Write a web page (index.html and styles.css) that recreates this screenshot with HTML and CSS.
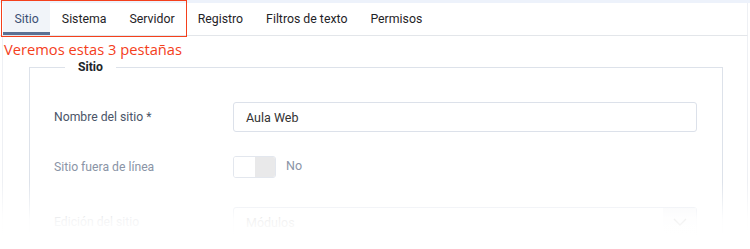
FILE: index.html
```html
<!DOCTYPE html>
<html lang="es">
<head>
<meta charset="utf-8">
<link rel="stylesheet" href="styles.css">
</head>
<body>
<div class="page">
  <div class="topstrip"></div>
  <nav class="tabs">
    <a class="tab active">Sitio</a>
    <a class="tab">Sistema</a>
    <a class="tab">Servidor</a>
    <a class="tab">Registro</a>
    <a class="tab">Filtros de texto</a>
    <a class="tab">Permisos</a>
  </nav>
  <div class="highlight"></div>
  <div class="panel">
    <p class="note">Veremos estas 3 pestañas</p>
    <fieldset class="group">
      <legend>Sitio</legend>
      <div class="row">
        <label class="lbl">Nombre del sitio *</label>
        <div class="input">Aula Web</div>
      </div>
      <div class="row row-toggle">
        <label class="lbl lbl-soft">Sitio fuera de línea</label>
        <div class="toggle"><span class="knob"></span><span class="track"></span></div>
        <span class="toggle-text">No</span>
      </div>
      <div class="row row-select">
        <label class="lbl">Edición del sitio</label>
        <div class="input select">Módulos
          <span class="chev"><svg width="14" height="8" viewBox="0 0 14 8"><path d="M1 1l6 6 6-6" fill="none" stroke="#333" stroke-width="1.3"/></svg></span>
        </div>
      </div>
    </fieldset>
  </div>
  <div class="fade"></div>
</div>
</body>
</html>
```
FILE: styles.css
```css
* { box-sizing: border-box; }
html, body { margin: 0; padding: 0; background: #fff; }
body { font-family: Roboto, "Liberation Sans", sans-serif; font-size: 12px; color: #22262a; }
.page { position: relative; width: 750px; height: 249px; overflow: hidden; }
.topstrip { height: 3px; background: #edf2fb; }
.tabs { display: flex; height: 33px; border-bottom: 1px solid #e3e6ea; padding-left: 3px; margin-right: 2px; border-right: 1px solid #eef0f4; }
.tab { display: flex; align-items: center; padding: 2px 11.5px 0; color: #1f2327; font-size: 12.3px; border-bottom: 3px solid transparent; height: 100%; }
.tab.active { background: #f1f4f9; color: #3b4f74; border-bottom-color: #5a7093; }
.highlight { position: absolute; left: 1px; top: 0; width: 186px; height: 37px; border: 1.5px solid #f4401c; }
.panel { margin: 0 2px 0 2px; border-left: 1px solid #eef0f4; border-right: 1px solid #eef0f4; height: 220px; }
.note { margin: 0; padding: 3px 0 0 1px; font-family: "Open Sans", "Noto Sans", sans-serif; font-size: 14.7px; color: #f4401c; line-height: 20px; }
.group { margin: 1px 24px 0 26px; border: 1px solid #dde2ea; border-bottom: none; padding: 28px 25px 0 24px; }
.group legend { font-weight: 700; font-size: 12.2px; color: #22262a; padding: 0 13px; margin-left: 11px; }
.row { display: flex; align-items: center; height: 30px; margin-bottom: 24px; }
.lbl { width: 179px; color: #4a5568; font-size: 12.2px; }
.lbl-soft { color: #8a94a6; }
.input { flex: 1; height: 30px; border: 1px solid #dce1ea; border-radius: 3px; padding: 0 12px; display: flex; align-items: center; color: #333; font-size: 12.5px; }
.row-toggle { height: 22px; margin-bottom: 29px; }
.toggle { display: flex; width: 43px; height: 22px; border: 1px solid #e3e7ee; border-radius: 3px; overflow: hidden; }
.knob { width: 21px; background: #fff; }
.track { flex: 1; background: #e9e9ea; }
.toggle-text { margin-left: 10px; color: #8a94a6; margin-top: -4px; font-size: 12.5px; }
.select { position: relative; }
.chev { position: absolute; right: 0; top: 0; bottom: 0; width: 33px; display: flex; align-items: center; justify-content: center; background: #f4f5f7; }
.fade { position: absolute; left: 0; right: 0; top: 182px; bottom: 0; background: linear-gradient(to bottom, rgba(255,255,255,0) 0%, rgba(255,255,255,0.93) 55%, #fff 80%); }
```
